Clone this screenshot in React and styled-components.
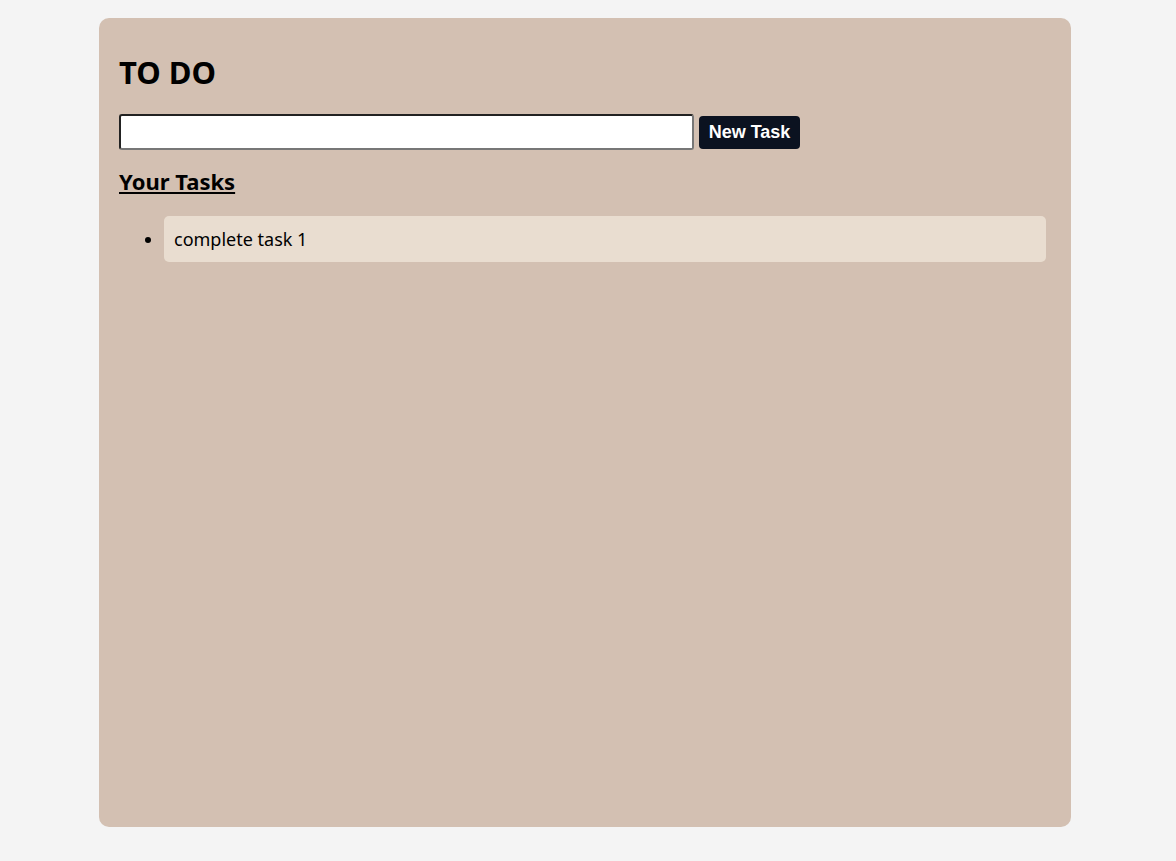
import React from "react";
import styled, { createGlobalStyle } from "styled-components";

export default function App() {
	return (
		<>
			<GlobalStyle />
			<Board>
				<Title>TO DO</Title>
				<Form onSubmit={(e) => e.preventDefault()}>
					<TaskInput type="text" />
					<AddButton type="submit">New Task</AddButton>
				</Form>
				<SubTitle>Your Tasks</SubTitle>
				<TaskList>
					<TaskItem>complete task 1</TaskItem>
				</TaskList>
			</Board>
		</>
	);
}

const GlobalStyle = createGlobalStyle`
	html, body {
		margin: 0;
		background-color: #f4f4f4;
		font-family: "Noto Sans", "Open Sans", sans-serif;
	}
`;

const Board = styled.div`
	box-sizing: border-box;
	width: 972px;
	height: 809px;
	margin: 18px 0 0 99px;
	padding: 20px;
	background-color: #d3c0b2;
	border-radius: 10px;
	display: flex;
	flex-direction: column;
`;

const Title = styled.h1`
	margin: 14px 0 0 0;
	font-size: 31px;
	line-height: 40px;
	font-weight: 700;
	color: #000;
`;

const Form = styled.form`
	display: flex;
	align-items: center;
	gap: 5px;
	margin-top: 22px;
`;

const TaskInput = styled.input`
	box-sizing: border-box;
	width: 575px;
	height: 36px;
	border: 2px solid #222;
	border-right-color: #777;
	border-bottom-color: #777;
	border-radius: 3px;
	background: #fff;
`;

const AddButton = styled.button`
	box-sizing: border-box;
	height: 33px;
	width: 101px;
	padding: 0;
	border: none;
	border-radius: 4px;
	background-color: #0b1220;
	color: #fff;
	font-family: "Liberation Sans", Arial, sans-serif;
	font-size: 18px;
	font-weight: 700;
`;

const SubTitle = styled.h2`
	margin: 16px 0 0 0;
	font-size: 22px;
	line-height: 30px;
	font-weight: 700;
	text-decoration: underline;
	color: #000;
`;

const TaskList = styled.ul`
	margin: 20px 0 0 0;
	padding: 0 5px 0 45px;
`;

const TaskItem = styled.li`
	box-sizing: border-box;
	height: 46px;
	padding: 0 10px;
	list-style: disc;
	line-height: 46px;
	background-color: #e9ddd0;
	border-radius: 5px;
	font-size: 18px;
	color: #000;
`;
